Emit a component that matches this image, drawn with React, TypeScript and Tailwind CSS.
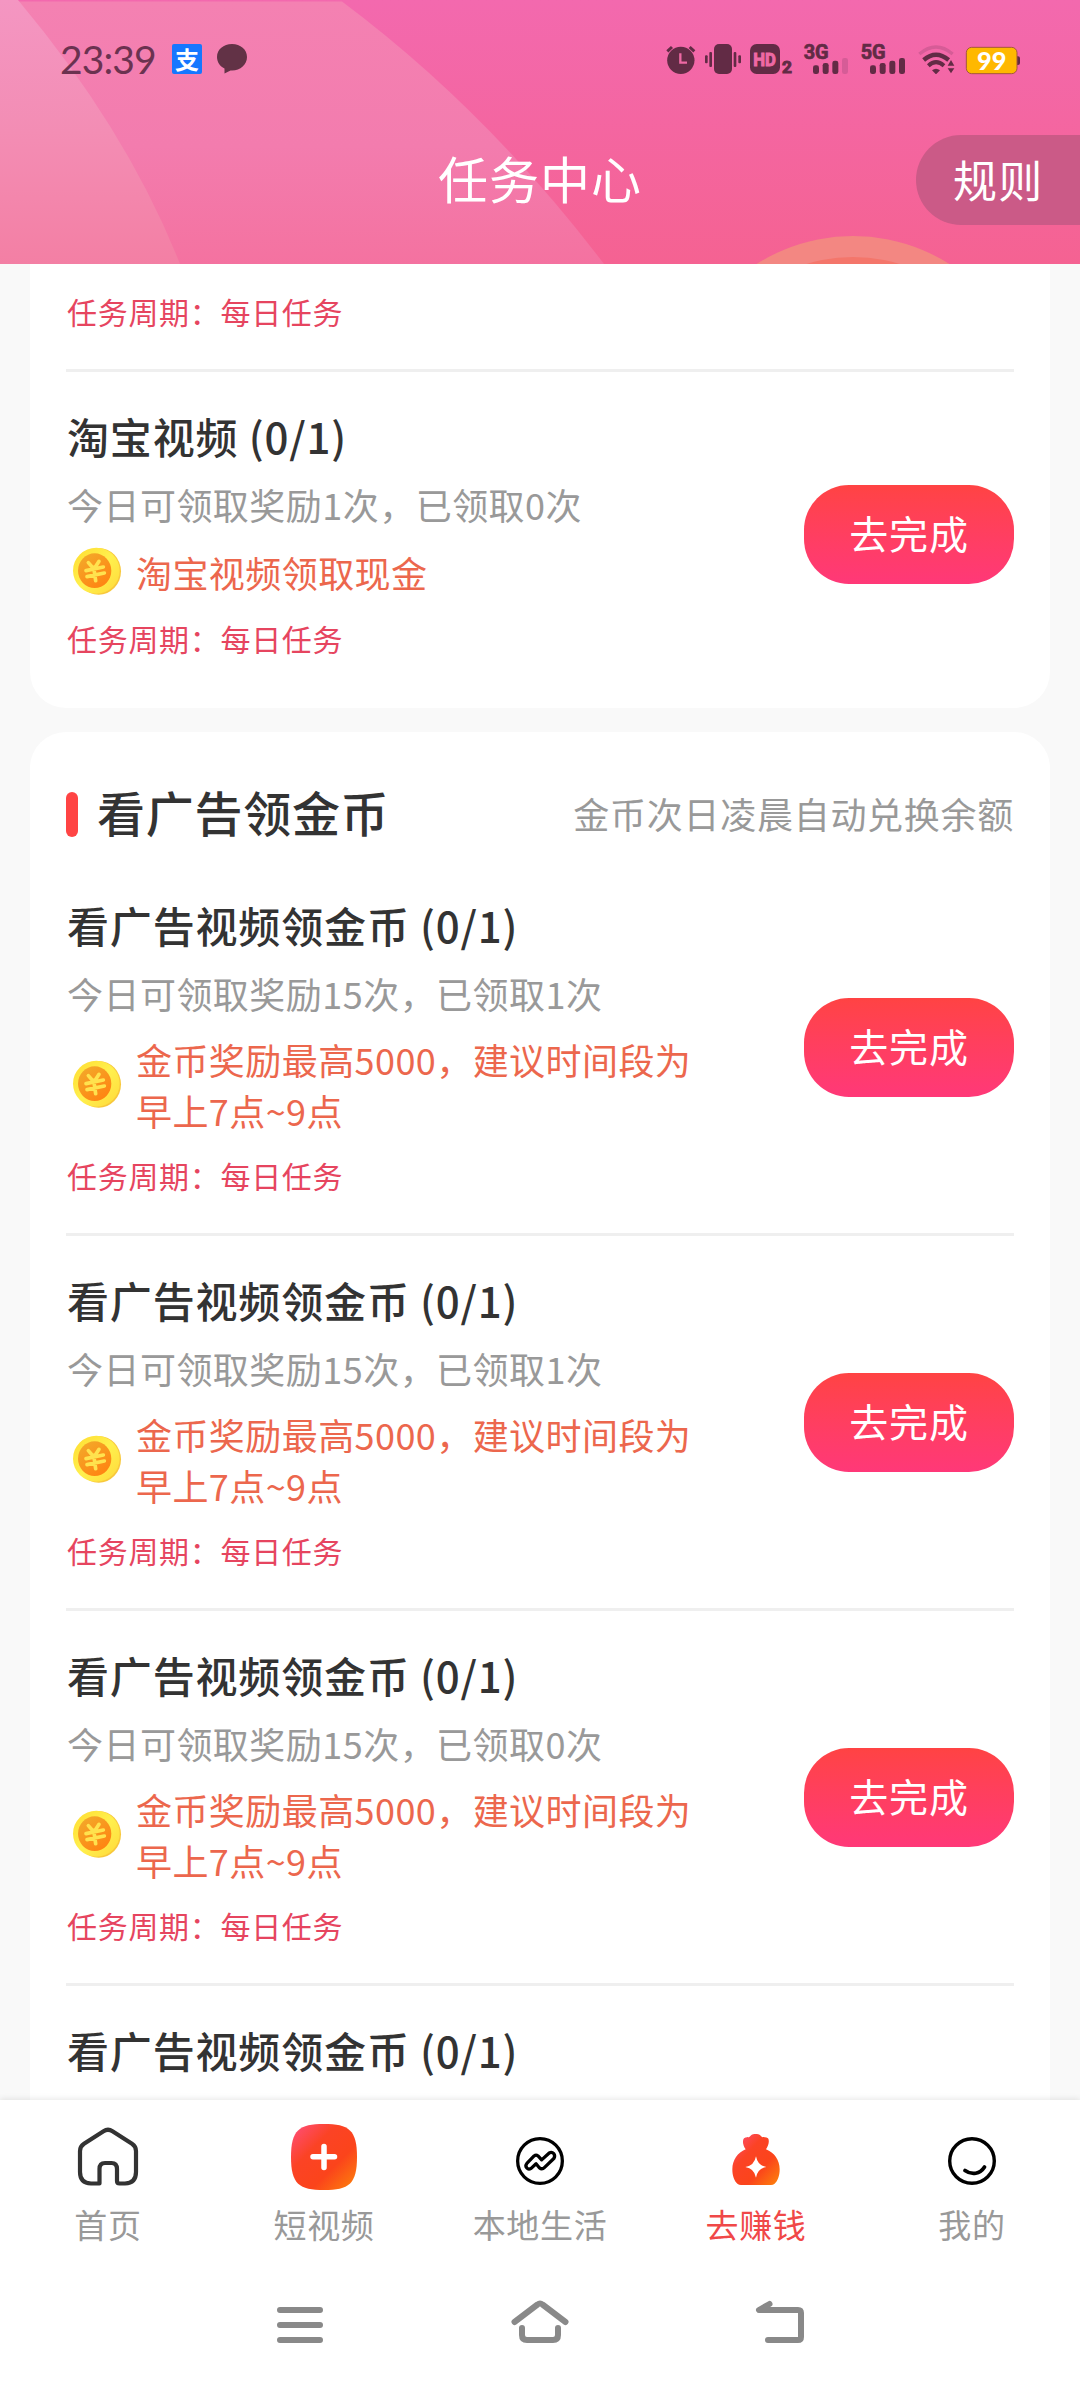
import React from "react";

interface Task {
  id: number;
  title: string;
  summary: string;
  reward: string;
}

interface TabItem {
  label: string;
  icon: React.ReactNode;
  active?: boolean;
}

const cashTasks: Task[] = [
  {
    id: 1,
    title: "淘宝视频 (0/1)",
    summary: "今日可领取奖励1次，已领取0次",
    reward: "淘宝视频领取现金",
  },
];

const adTasks: Task[] = [1, 1, 0, 0].map((received, index) => ({
  id: index + 1,
  title: "看广告视频领金币 (0/1)",
  summary: `今日可领取奖励15次，已领取${received}次`,
  reward: "金币奖励最高5000，建议时间段为早上7点~9点",
}));

function AlarmIcon() {
  return (
    <svg viewBox="48 42 108 90" className="h-[30px] w-[36px]">
      <circle cx="92.5" cy="91" r="41" fill="#622b45" />
      <path
        d="M52 64 66 51M133 64 119 51"
        stroke="#622b45"
        strokeWidth="9"
      />
      <path d="M91 70V98H111" fill="none" stroke="#ee69a4" strokeWidth="7" />
    </svg>
  );
}

function VibrateIcon() {
  return (
    <svg viewBox="156 42 132 90" className="h-[30px] w-[44px]" fill="#622b45">
      <rect x="192" y="42" width="54" height="90" rx="15" />
      <rect x="178" y="66" width="8" height="45" rx="3" />
      <rect x="165" y="76" width="8" height="24" rx="3" />
      <rect x="251" y="66" width="8" height="45" rx="3" />
      <rect x="265" y="76" width="8" height="24" rx="3" />
    </svg>
  );
}

function HdIcon() {
  return (
    <svg
      viewBox="288 42 162 90"
      className="h-[30px] w-[54px] overflow-visible font-['Roboto',sans-serif]"
    >
      <rect x="300" y="42" width="90" height="90" rx="20" fill="#622b45" />
      <text
        x="310"
        y="107"
        fontSize="56"
        fontWeight="700"
        textLength="68"
        lengthAdjust="spacingAndGlyphs"
        fill="#ee69a4"
        stroke="#ee69a4"
        strokeWidth="3"
      >
        HD
      </text>
      <text
        x="396"
        y="130"
        fontSize="52"
        fontWeight="700"
        fill="#622b45"
        stroke="#622b45"
        strokeWidth="3"
      >
        2
      </text>
    </svg>
  );
}

function SignalIcon({ label, strength }: { label: string; strength: number }) {
  return (
    <svg
      viewBox="450 42 171 90"
      className="h-[30px] w-[57px] overflow-visible font-['Roboto',sans-serif]"
      fill="#622b45"
    >
      <text
        x="461"
        y="86"
        fontSize="59"
        fontWeight="700"
        textLength="75"
        lengthAdjust="spacingAndGlyphs"
        stroke="#622b45"
        strokeWidth="2"
      >
        {label}
      </text>
      {[106, 99, 92, 84].map((y, index) => (
        <rect
          key={y}
          x={489 + index * 29}
          y={y}
          width="18"
          height={132 - y}
          rx="7"
          fill={index < strength ? "#622b45" : "#d65c97"}
        />
      ))}
    </svg>
  );
}

function WifiIcon() {
  return (
    <svg viewBox="792 42 147 90" className="h-[30px] w-[49px]" fill="none">
      <path d="M808 72Q858 30 908 72" stroke="#d65c97" strokeWidth="10" />
      <path d="M821 90Q858 58 896 90" stroke="#622b45" strokeWidth="13" />
      <path d="M835 107Q858 86 882 107" stroke="#622b45" strokeWidth="12" />
      <path d="M846 121Q858 112 870 121L858 133Z" fill="#622b45" />
      <path d="M893 107 903 90 913 107ZM893 115H913L903 130Z" fill="#622b45" />
    </svg>
  );
}

function BatteryIcon() {
  return (
    <svg
      viewBox="939 42 171 90"
      className="h-[30px] w-[57px] overflow-visible font-['Lato',sans-serif]"
    >
      <path d="M1100 79h4q6 0 6 6v14q0 6-6 6h-4z" fill="#622b45" />
      <rect x="949" y="52" width="152" height="79" rx="16" fill="#ffb800" stroke="#a4573c" strokeWidth="3" />
      <text x="1025" y="120" fontSize="76" fontWeight="900" textAnchor="middle" fill="#fff">
        99
      </text>
    </svg>
  );
}

function StatusBar() {
  return (
    <div className="flex h-[74px] items-end justify-between pr-[60px] pl-[60px]">
      <div className="flex h-[30px] items-center">
        <span className="w-[112px] font-['Lato',sans-serif] text-[39px] leading-[30px] tracking-[-0.9px] text-[#6b3250]">
          23:39
        </span>
        <span className="flex h-[30px] w-[30px] items-center justify-center rounded-[2px] bg-[#1677ff] text-[24px] leading-[28px] font-bold text-white">
          支
        </span>
        <svg viewBox="0 0 30 30" className="ml-[15px] h-[30px] w-[30px]">
          <path
            d="M15 0C23.500 0 30 5.500 30 13S23.500 26.500 15 26.500L13.500 26.400 7.500 29.500V24.500C2.800 22.200 0 18 0 13 0 5.500 6.500 0 15 0Z"
            fill="#623246"
          />
        </svg>
      </div>
      <div className="flex h-[30px]">
        <AlarmIcon />
        <VibrateIcon />
        <HdIcon />
        <SignalIcon label="3G" strength={3} />
        <SignalIcon label="5G" strength={4} />
        <WifiIcon />
        <BatteryIcon />
      </div>
    </div>
  );
}

function Header() {
  return (
    <header className="relative h-[264px] shrink-0 overflow-hidden bg-linear-to-b from-[#f369ae] to-[#f56292]">
      <svg viewBox="0 0 1080 264" className="absolute inset-0 h-[264px] w-[1080px]">
        <defs>
          <linearGradient id="beam" x1="0" y1="0" x2="0" y2="1">
            <stop offset="0" stopColor="#f481b2" />
            <stop offset="0.55" stopColor="#f37cae" />
            <stop offset="1" stopColor="#f472a0" />
          </linearGradient>
          <linearGradient id="beamLight" x1="0" y1="0" x2="0" y2="1">
            <stop offset="0" stopColor="#f496c2" />
            <stop offset="0.5" stopColor="#f38db4" />
            <stop offset="1" stopColor="#f37fa4" />
          </linearGradient>
        </defs>
        <path d="M0 1.500H342Q487 110 604 264H0Z" fill="url(#beam)" />
        <path d="M0 0H18Q127 130 180 264H0Z" fill="url(#beamLight)" />
        <circle cx="853" cy="416" r="180" fill="#f38782" />
        <circle cx="853" cy="416" r="159" fill="#f4766b" />
      </svg>
      <div className="relative">
        <StatusBar />
        <div className="mt-[61px] grid h-[90px] grid-cols-[1fr_auto_1fr] items-center">
          <span />
          <h1 className="pb-[6px] text-[50px] leading-[84px] tracking-[0.02em] text-white">
            任务中心
          </h1>
          <button className="h-[90px] w-[164px] justify-self-end rounded-l-full bg-[#cb5a87] pb-[2px] pl-[37px] text-left text-[44px] leading-[88px] tracking-[0.03em] text-white">
            规则
          </button>
        </div>
      </div>
    </header>
  );
}

function CoinIcon() {
  return (
    <svg viewBox="20 15 180 162" className="h-[54px] w-[60px] shrink-0">
      <defs>
        <linearGradient id="coinRim" x1="0" y1="0" x2="1" y2="1">
          <stop offset="0" stopColor="#ffdc30" />
          <stop offset="0.5" stopColor="#fff04e" />
          <stop offset="1" stopColor="#ffd93a" />
        </linearGradient>
        <linearGradient id="coinFace" x1="0" y1="0" x2="0.7" y2="1">
          <stop offset="0" stopColor="#f2ac2c" />
          <stop offset="1" stopColor="#ff8412" />
        </linearGradient>
      </defs>
      <ellipse cx="115" cy="94" rx="67" ry="70" fill="#f8c83c" />
      <ellipse cx="108" cy="92" rx="70" ry="69" fill="url(#coinRim)" />
      <ellipse cx="103" cy="92" rx="50" ry="52" fill="url(#coinFace)" />
      <path
        d="M84 68 98 84M116 64 103 84M77 92 129 81M80 110 132 99M100 82 106 122"
        fill="none"
        stroke="#ffe24e"
        strokeWidth="11"
        strokeLinecap="round"
      />
    </svg>
  );
}

function Cycle() {
  return (
    <p className="text-[30px] leading-[42px] tracking-[0.023em] text-[#e6455f]">
      任务周期：每日任务
    </p>
  );
}

function TaskItem({ task }: { task: Task }) {
  return (
    <li className="flex items-center justify-between border-b-3 border-[#efefef] pt-[34px] pb-[37px] last:border-0">
      <div className="pl-px">
        <h3 className="text-[42px] leading-[60px] font-medium tracking-[0.02em] text-[#333]">
          {task.title}
        </h3>
        <p className="mt-[13px] text-[36px] leading-[51px] tracking-[0.013em] text-[#999]">
          {task.summary}
        </p>
        <div className="mt-[15px] flex min-h-[54px] items-center">
          <CoinIcon />
          <p className="ml-[9px] w-[572px] text-[36px] leading-[51px] tracking-[0.012em] text-[#ec674d]">
            {task.reward}
          </p>
        </div>
        <div className="mt-[18px]">
          <Cycle />
        </div>
      </div>
      <button className="mt-[4px] h-[99px] w-[210px] shrink-0 rounded-[45px] bg-linear-to-b from-[#ff4343] to-[#ff3878] pb-[4px] text-[39px] leading-[95px] tracking-[0.02em] text-white">
        去完成
      </button>
    </li>
  );
}

function HomeIcon() {
  return (
    <svg viewBox="0 0 66 66" className="h-[66px] w-[66px]" fill="none">
      <path
        d="M24.500 59.500H16Q5 59 5 48V27Q5 22.500 9 19.800L28.500 7.200Q33 4.300 37.500 7.200L57 19.800Q61 22.500 61 27V48Q61 59 50 59.500H44.500Q42 59.500 42 57V45Q42 39 36.500 39H30Q24.500 39 24.500 45Z"
        stroke="#333"
        strokeWidth="4.200"
        strokeLinejoin="round"
      />
    </svg>
  );
}

function VideoIcon() {
  return (
    <svg viewBox="0 0 66 66" className="h-[66px] w-[66px]">
      <defs>
        <linearGradient id="warm" x1="0" y1="0" x2="1" y2="1">
          <stop offset="0" stopColor="#ff4f80" />
          <stop offset="0.35" stopColor="#fb4325" />
          <stop offset="0.65" stopColor="#fb441b" />
          <stop offset="1" stopColor="#fd860b" />
        </linearGradient>
      </defs>
      <path
        d="M33 0C58 0 66 6 66 33S58 66 33 66 0 60 0 33 8 0 33 0Z"
        fill="url(#warm)"
      />
      <path
        d="M33 22.500V43.500M22 32.800H43.500"
        stroke="#fff"
        strokeWidth="5.500"
        strokeLinecap="round"
      />
    </svg>
  );
}

function LocalIcon() {
  return (
    <svg viewBox="36 50 146 145" className="mt-[8px] h-[48px] w-[48px]" fill="none" stroke="#000">
      <circle cx="109" cy="122.500" r="68" strokeWidth="10" />
      <path
        d="M69 130 91 107Q97 102 103 107L114 119 137 98Q145 94 151 100 156 107 151 115L123 142Q115 150 107 143L97 131 82 145Q74 150 69 144 63 137 69 130Z"
        strokeWidth="10"
        strokeLinejoin="round"
      />
    </svg>
  );
}

function BagIcon() {
  return (
    <svg viewBox="683 42 144 153" className="mt-[5px] h-[51px] w-[48px]">
      <path
        d="M724 88C716 76 713 62 719 55 725 50 732 53 736 50 744 39 764 39 772 50 777 53 785 50 791 55 796 62 793 76 785 88 810 98 826 120 826 148 826 168 820 184 810 192Q806 195 800 195H710Q704 195 700 192C690 184 684 168 684 148 684 120 700 98 724 88Z"
        fill="url(#warm)"
      />
      <path
        d="M755 109Q760 137 786 141 760 145 755 173 750 145 723 141 750 137 755 109Z"
        fill="#fff"
      />
    </svg>
  );
}

function MineIcon() {
  return (
    <svg viewBox="0 0 48 48" className="mt-[8px] h-[48px] w-[48px]" fill="none" stroke="#000">
      <circle cx="24" cy="24" r="22.300" strokeWidth="3.400" />
      <path
        d="M17 33.500C24 38.500 32 37 36.500 30"
        strokeWidth="3.800"
        strokeLinecap="round"
      />
    </svg>
  );
}

const tabs: TabItem[] = [
  { label: "首页", icon: <HomeIcon /> },
  { label: "短视频", icon: <VideoIcon /> },
  { label: "本地生活", icon: <LocalIcon /> },
  { label: "去赚钱", icon: <BagIcon />, active: true },
  { label: "我的", icon: <MineIcon /> },
];

function TabBar() {
  return (
    <nav className="grid h-[162px] grid-cols-5">
      {tabs.map((tab) => (
        <div key={tab.label} className="flex flex-col items-center pt-[24px]">
          <div className="flex h-[66px] items-center justify-center">{tab.icon}</div>
          <span
            className={`mt-[10px] text-[33px] leading-[48px] tracking-[0.02em] ${
              tab.active ? "text-[#f04848]" : "text-[#999]"
            }`}
          >
            {tab.label}
          </span>
        </div>
      ))}
    </nav>
  );
}

function SystemNav() {
  return (
    <div className="flex justify-center pt-[30px]">
      <svg
        viewBox="0 0 540 60"
        className="h-[60px] w-[540px]"
        fill="none"
        stroke="#898989"
        strokeWidth="6"
        strokeLinecap="round"
        strokeLinejoin="round"
      >
        <path d="M10 18H50M10 33H50M10 48H50" />
        <path d="M244.500 30 267.500 12.500Q270 10.500 272.500 12.500L295.500 30M252 36V43Q252 48 257 48H283Q288 48 288 43V36" />
        <path d="M499.500 12 489 18H528Q531 18 531 21V45Q531 48 528 48H498" />
      </svg>
    </div>
  );
}

function App() {
  return (
    <div className="flex h-[2388px] w-[1080px] flex-col overflow-hidden bg-[#f9f9f9] font-['Noto_Sans_CJK_SC',sans-serif]">
      <Header />
      <main className="flex h-[1836px] shrink-0 flex-col gap-[24px] overflow-hidden px-[30px]">
        <section className="shrink-0 rounded-b-[36px] bg-white px-[36px] pb-[12px]">
          <div className="border-b-3 border-[#efefef] pt-[26px] pb-[37px] pl-px">
            <Cycle />
          </div>
          <ul>
            {cashTasks.map((task) => (
              <TaskItem key={task.id} task={task} />
            ))}
          </ul>
        </section>
        <section className="shrink-0 rounded-[36px] bg-white px-[36px]">
          <div className="flex h-[129px] items-center justify-between pt-[36px]">
            <div className="flex items-center">
              <span className="h-[45px] w-[12px] rounded-full bg-[#ff4444]" />
              <h2 className="ml-[19px] pb-[7px] text-[48px] leading-[66px] font-medium tracking-[0.015em] text-[#333]">
                看广告领金币
              </h2>
            </div>
            <span className="pb-[3px] text-[36px] tracking-[0.02em] text-[#999]">
              金币次日凌晨自动兑换余额
            </span>
          </div>
          <ul>
            {adTasks.map((task) => (
              <TaskItem key={task.id} task={task} />
            ))}
          </ul>
        </section>
      </main>
      <footer className="relative h-[288px] shrink-0 bg-white shadow-[0_-1px_6px_rgba(0,0,0,0.1)]">
        <TabBar />
        <SystemNav />
      </footer>
    </div>
  );
}

export default App;
